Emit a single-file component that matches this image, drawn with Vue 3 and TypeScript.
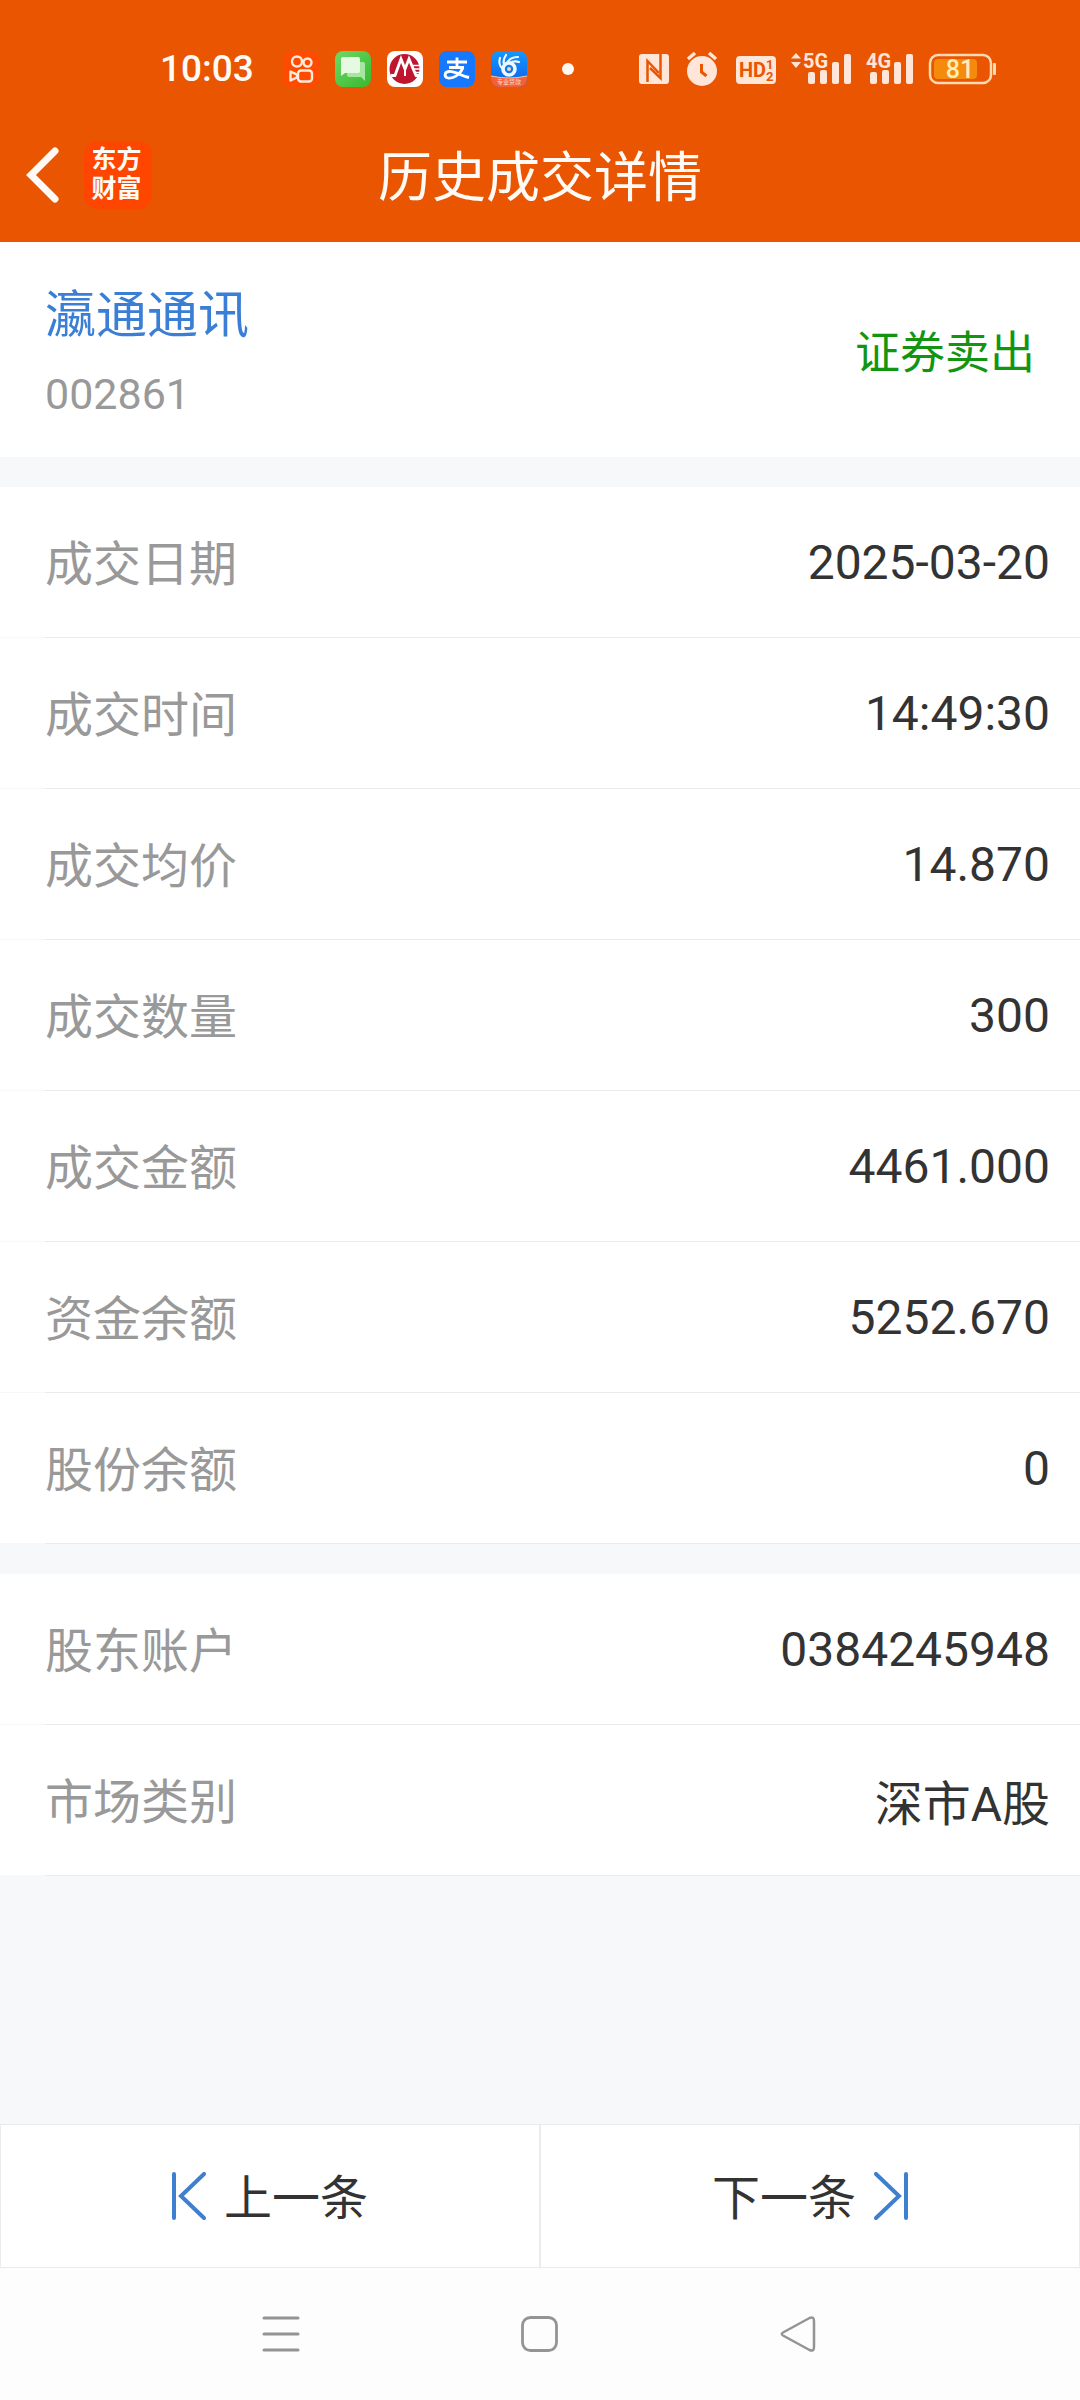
<script setup lang="ts">
interface DetailItem {
  label: string
  value: string
}

const groups: DetailItem[][] = [
  [
    { label: '成交日期', value: '2025-03-20' },
    { label: '成交时间', value: '14:49:30' },
    { label: '成交均价', value: '14.870' },
    { label: '成交数量', value: '300' },
    { label: '成交金额', value: '4461.000' },
    { label: '资金余额', value: '5252.670' },
    { label: '股份余额', value: '0' },
  ],
  [
    { label: '股东账户', value: '0384245948' },
    { label: '市场类别', value: '深市A股' },
  ],
]
</script>

<template>
  <div class="page">
    <header class="top">
      <div class="status">
        <div class="status-left">
          <span class="clock">10:03</span>
          <div class="apps">
            <svg width="36" height="36" viewBox="0 0 36 36">
              <rect width="36" height="36" rx="8" fill="#ff4b00" />
              <g fill="none" stroke="#ffeadb" stroke-width="2.4">
                <circle cx="14" cy="10.5" r="5" />
                <circle cx="24.5" cy="11.5" r="4" />
                <rect x="15" y="19.5" width="14" height="11" rx="3" />
                <path d="M7.5 20.5v9l6.5-3.2v-2.6z" stroke-linejoin="round" />
              </g>
            </svg>
            <svg width="36" height="36" viewBox="0 0 36 36">
              <defs>
                <linearGradient id="green" x1="0" y1="0" x2="1" y2="1">
                  <stop offset="0" stop-color="#6fd866" />
                  <stop offset="1" stop-color="#38b82e" />
                </linearGradient>
              </defs>
              <rect width="36" height="36" rx="8" fill="url(#green)" />
              <path d="M14 11h14a2 2 0 0 1 2 2v17l-4-4H14a2 2 0 0 1-2-2V13a2 2 0 0 1 2-2z" fill="#a5e79f" />
              <path d="M8 6h15a2 2 0 0 1 2 2v12a2 2 0 0 1-2 2H10l-4 3V8a2 2 0 0 1 2-2z" fill="#e6fae3" />
            </svg>
            <svg width="36" height="36" viewBox="0 0 36 36">
              <rect width="36" height="36" rx="8" fill="#fff" />
              <circle cx="17.5" cy="18" r="15" fill="#c0152f" />
              <path d="M4 24.500h4L14 8l4 10 4-10 7 16.500h5" fill="none" stroke="#fff" stroke-width="2.800" />
              <path d="M26 14.500h8M27 18h7M28 21.500h6" stroke="#fff" stroke-width="1.500" />
              <path d="M18 16v9" stroke="#fff" stroke-width="2" />
            </svg>
            <svg width="36" height="36" viewBox="0 0 36 36">
              <rect width="36" height="36" rx="8" fill="#1677ff" />
              <g fill="none" stroke="#fff" stroke-width="2.800">
                <path d="M8 11h20M18 6.500v10M10 16.500h15" />
                <path d="M24 16.500C21 24 14 28 9 27c-4-1-4-6 1-6.500 6-.5 12 4.500 20 6" />
              </g>
            </svg>
            <svg width="36" height="36" viewBox="0 0 36 36">
              <defs>
                <linearGradient id="blue" x1="0" y1="0" x2="0" y2="1">
                  <stop offset="0" stop-color="#1597ff" />
                  <stop offset="1" stop-color="#0b5fe8" />
                </linearGradient>
                <clipPath id="tile"><rect width="36" height="36" rx="8" /></clipPath>
              </defs>
              <g clip-path="url(#tile)">
                <rect width="36" height="36" fill="url(#blue)" />
                <path d="M0 25q18 4 36 0v11H0z" fill="#f4603c" />
                <path d="M0 25q18 4 36 0" fill="none" stroke="#f7c58e" stroke-width="1" />
                <circle cx="18" cy="18" r="6" fill="none" stroke="#f0f8ff" stroke-width="3.600" />
                <circle cx="18" cy="18" r="2" fill="#f3d9b0" />
                <path d="M12 18C8 15 8 10 9 7M13 13c-1-3 0-6 2-9M16 12c2-4 6-6 11-6M19 12c3-2 6-2 9-1" fill="none" stroke="#f0f8ff" stroke-width="2.200" stroke-linecap="round" />
                <text x="18" y="33" class="tile-text">专业贷款</text>
              </g>
            </svg>
          </div>
          <span class="dot"></span>
        </div>
        <div class="status-right">
          <svg width="30" height="34" viewBox="0 0 30 34">
            <rect y="2" width="30" height="30" rx="3" fill="#ffe6d8" />
            <path d="M8.500 30V9L20 21" fill="none" stroke="#e95500" stroke-width="2.500" />
            <path d="M21.500 2v24L11 16" fill="none" stroke="#e95500" stroke-width="2.500" />
          </svg>
          <svg class="alarm" width="32" height="34" viewBox="0 0 32 34">
            <circle cx="16" cy="19" r="15" fill="#ffe6d8" />
            <path d="M2 7l7-6M30 7l-7-6" stroke="#ffe6d8" stroke-width="3.500" />
            <path d="M15.500 12v8l5 4" fill="none" stroke="#e95500" stroke-width="3" />
          </svg>
          <svg class="hd" width="40" height="34" viewBox="0 0 40 34">
            <rect y="4" width="40" height="28" rx="4" fill="#ffe6d8" />
            <text x="3" y="25" class="hd-text">HD</text>
            <text x="30" y="17" class="hd-num">1</text>
            <text x="30" y="29" class="hd-num">2</text>
          </svg>
          <svg class="net" width="60" height="46" viewBox="0 -6 60 46">
            <g fill="#ffe6d8">
              <path d="M0 6.500L5 1l5 5.500zM0 10h10L5 16z" />
              <text x="12" y="16" class="net-text">5G</text>
              <rect x="17" y="20" width="7" height="12" rx="2" />
              <rect x="29" y="18" width="7" height="14" rx="2" />
              <rect x="41" y="10" width="7" height="22" rx="2" />
              <rect x="53" y="2" width="7" height="30" rx="2" />
            </g>
          </svg>
          <svg class="net" width="47" height="46" viewBox="0 -6 47 46">
            <g fill="#ffe6d8">
              <text x="0" y="16" class="net-text">4G</text>
              <rect x="4" y="20" width="7" height="12" rx="2" />
              <rect x="16" y="18" width="7" height="14" rx="2" />
              <rect x="28" y="10" width="7" height="22" rx="2" />
              <rect x="40" y="2" width="7" height="30" rx="2" />
            </g>
          </svg>
          <svg class="net" width="68" height="34" viewBox="0 0 68 34">
            <rect x="2" y="3" width="61" height="28" rx="8" fill="none" stroke="#ffd9b0" stroke-width="2.500" />
            <rect x="6" y="7" width="43" height="20" rx="4" fill="#f58a0c" />
            <rect x="65" y="11" width="3" height="12" rx="1" fill="#ffd9b0" />
            <text x="32" y="26" class="battery-text">81</text>
          </svg>
        </div>
      </div>
      <div class="titlebar">
        <button type="button" class="back" aria-label="返回">
          <svg width="34" height="56" viewBox="0 0 34 56">
            <path d="M29 4L5 28l24 24" fill="none" stroke="#fffaf5" stroke-width="7" stroke-linecap="round" />
          </svg>
        </button>
        <span class="brand">东方<br />财富</span>
        <h1 class="title">历史成交详情</h1>
      </div>
    </header>

    <main>
      <section class="stock">
        <div>
          <div class="name">瀛通通讯</div>
          <div class="code">002861</div>
        </div>
        <span class="side">证券卖出</span>
      </section>

      <dl v-for="(group, index) in groups" :key="index" class="group">
        <div v-for="item in group" :key="item.label" class="row">
          <div class="cells">
            <dt>{{ item.label }}</dt>
            <dd>{{ item.value }}</dd>
          </div>
        </div>
      </dl>
    </main>

    <footer class="bottom">
      <div class="pager">
        <button type="button">
          <svg width="34" height="48" viewBox="0 0 34 48">
            <path d="M2 2v44M32 2L9 24l23 22" fill="none" stroke="#3f7fd0" stroke-width="4" stroke-linecap="round" />
          </svg>
          <span>上一条</span>
        </button>
        <button type="button">
          <span>下一条</span>
          <svg width="34" height="48" viewBox="0 0 34 48">
            <path d="M32 2v44M2 2l23 22L2 46" fill="none" stroke="#3f7fd0" stroke-width="4" stroke-linecap="round" />
          </svg>
        </button>
      </div>
      <nav class="system">
        <button type="button" aria-label="最近任务">
          <svg width="38" height="36" viewBox="0 0 38 36">
            <path d="M2 2h34M2 18h34M2 34h34" stroke="#949494" stroke-width="3" stroke-linecap="round" />
          </svg>
        </button>
        <button type="button" aria-label="主屏幕">
          <svg width="38" height="36" viewBox="0 0 38 36">
            <rect x="1.500" y="1.500" width="34" height="33" rx="8" fill="none" stroke="#949494" stroke-width="2.800" />
          </svg>
        </button>
        <button type="button" aria-label="返回上一页">
          <svg width="38" height="36" viewBox="0 0 38 36">
            <path d="M3 16.500L29.500 2Q34 0 34 5v26q0 5-4.500 3L3 19.500q-2.500-1.500 0-3z" fill="none" stroke="#949494" stroke-width="2.500" />
          </svg>
        </button>
      </nav>
    </footer>
  </div>
</template>

<style>
body {
  margin: 0;
}
</style>

<style scoped>
.page {
  display: flex;
  flex-direction: column;
  min-height: 100vh;
  background: #f7f8fa;
  color: #333;
  font-family: Roboto, "Noto Sans CJK SC", sans-serif;
  font-size: 48px;
}

svg {
  display: block;
  flex: none;
}

button {
  display: flex;
  align-items: center;
  justify-content: center;
  padding: 0;
  border: 0;
  background: none;
  color: inherit;
  font: inherit;
}

.top {
  background: #e95500;
  color: #fffaf5;
}

.status {
  display: flex;
  align-items: center;
  justify-content: space-between;
  height: 76px;
  padding: 31px 84px 0 160px;
}

.status-left,
.status-right,
.apps {
  display: flex;
  align-items: center;
}

.clock {
  width: 123px;
  font-size: 37px;
  font-weight: 500;
  line-height: 40px;
}

.apps {
  gap: 16px;
}

.dot {
  width: 12px;
  height: 12px;
  margin-left: 35px;
  border-radius: 50%;
  background: #fff8f0;
}

.alarm {
  margin-left: 17px;
}

.hd {
  margin-left: 18px;
}

.net {
  margin-left: 15px;
}

.tile-text {
  fill: #ffe3d2;
  font-size: 6px;
  text-anchor: middle;
}

.hd-text {
  fill: #e95500;
  font-size: 20px;
  font-weight: 700;
}

.hd-num {
  fill: #e95500;
  font-size: 13px;
  font-weight: 700;
}

.net-text {
  font-size: 20px;
  font-weight: 700;
}

.battery-text {
  fill: #ffeebb;
  font-size: 25px;
  font-weight: 500;
  text-anchor: middle;
}

.titlebar {
  display: grid;
  grid-template-columns: 34px 68px 1fr 126px;
  align-items: center;
  column-gap: 24px;
  height: 135px;
  padding: 0 26px;
}

.brand {
  box-sizing: border-box;
  height: 68px;
  padding: 4px 3px 0 0;
  border-radius: 14px;
  background: #ff4600;
  font-size: 25px;
  font-weight: 700;
  line-height: 29px;
  text-align: center;
}

.title {
  margin: 0;
  padding-top: 8px;
  font-size: 54px;
  font-weight: 400;
  line-height: 64px;
  text-align: center;
}

.stock {
  display: flex;
  align-items: center;
  justify-content: space-between;
  height: 215px;
  padding: 0 45px;
  background: #fff;
}

.name {
  padding-top: 5px;
  color: #3a7fd5;
  font-size: 51px;
  line-height: 72px;
}

.code {
  margin-top: 12px;
  color: #999;
  font-size: 43px;
  line-height: 60px;
}

.side {
  color: #129612;
  font-size: 45px;
}

.group {
  margin: 30px 0 0;
}

.row::after {
  content: "";
  display: block;
  height: 1px;
  margin-left: 45px;
  background: #ebebeb;
}

.cells {
  display: flex;
  align-items: center;
  justify-content: space-between;
  height: 150px;
  padding: 0 30px 0 45px;
  background: #fff;
}

dt {
  padding-bottom: 4px;
  color: #999;
}

dd {
  margin: 0;
}

.bottom {
  margin-top: auto;
  background: #fdfdfd;
}

.pager {
  display: grid;
  grid-template-columns: 1fr 1fr;
  background: #fff;
}

.pager button {
  gap: 18px;
  height: 144px;
  border: 1px solid #ebebeb;
}

.pager span {
  padding-bottom: 4px;
}

.system {
  display: grid;
  grid-template-columns: 1fr 1fr 1fr;
  height: 132px;
  padding: 0 14%;
}
</style>
